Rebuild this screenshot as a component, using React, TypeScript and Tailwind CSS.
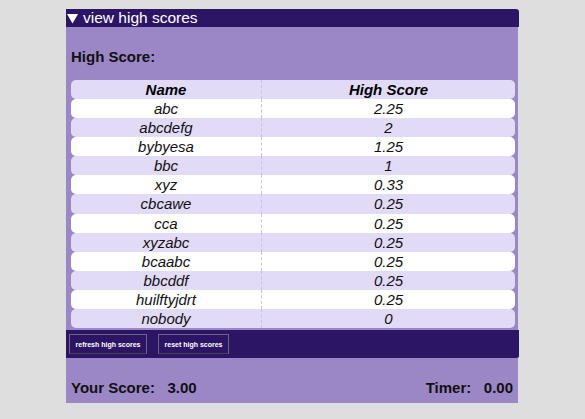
import React from "react";

const rows: [string, string][] = [
  ["abc", "2.25"],
  ["abcdefg", "2"],
  ["bybyesa", "1.25"],
  ["bbc", "1"],
  ["xyz", "0.33"],
  ["cbcawe", "0.25"],
  ["cca", "0.25"],
  ["xyzabc", "0.25"],
  ["bcaabc", "0.25"],
  ["bbcddf", "0.25"],
  ["huilftyjdrt", "0.25"],
  ["nobody", "0"],
];

export default function App() {
  return (
    <div
      className="w-[585px] h-[419px] bg-[#dedede] pt-[9px] pl-[66px]"
      style={{ fontFamily: '"Liberation Sans", Arial, sans-serif' }}
    >
      <div className="w-[453px] flex flex-col">
        <div className="h-[18px] bg-[#2d1566] rounded-tr-[3px] flex items-center pl-[1px] text-white text-[15.5px] leading-none">
          <svg width="11" height="10" viewBox="0 0 11 10" className="mr-[5px] mt-[1px]">
            <polygon points="0,0 11,0 5.5,9.5" fill="white" />
          </svg>
          <span>view high scores</span>
        </div>
        <div className="bg-[#9b87c5] w-[452px] pt-[21px] pb-[2px]">
          <div className="pl-[5px] text-[15px] font-bold text-[#111] h-[18px] leading-[18px]">High Score:</div>
          <div className="mt-[14px] ml-[5px] mr-[3px] grid grid-cols-[191px_1fr]">
            <div className="h-[19px] leading-[19px] text-center text-[15px] font-bold italic text-black bg-[#e2dbf8] rounded-l-[5px] border-r border-dashed border-[#c9bfe8]">Name</div>
            <div className="h-[19px] leading-[19px] text-center text-[15px] font-bold italic text-black bg-[#e2dbf8] rounded-r-[5px]">High Score</div>
            {rows.map(([n, s], i) => {
              const bg = i % 2 === 0 ? "bg-white" : "bg-[#e2dbf8]";
              return (
                <React.Fragment key={i}>
                  <div className={`h-[19.1px] leading-[19px] text-center text-[15px] italic text-[#111] ${bg} rounded-l-[5px] border-r border-dashed border-[#c9bfe8]`}>{n}</div>
                  <div className={`h-[19.1px] leading-[19px] text-center text-[15px] italic text-[#111] ${bg} rounded-r-[5px]`}>{s}</div>
                </React.Fragment>
              );
            })}
          </div>
        </div>
        <div className="h-[28px] bg-[#2d1566] flex items-center pl-[3px] gap-[11px] rounded-br-[2px]">
          <button className="h-[20px] w-[78px] bg-[#2d1566] border border-[#6b6780] border-b-[#444] text-white text-[7px] font-bold leading-none">refresh high scores</button>
          <button className="h-[20px] w-[71px] bg-[#2d1566] border border-[#6b6780] border-b-[#444] text-white text-[7px] font-bold leading-none">reset high scores</button>
        </div>
        <div className="h-[45px] bg-[#9b87c5] w-[452px] flex items-end justify-between px-[5px] pb-[4px] text-[15px] font-bold text-[#111]">
          <span>Your Score:&nbsp;&nbsp;&nbsp;3.00</span>
          <span>Timer:&nbsp;&nbsp; 0.00</span>
        </div>
      </div>
    </div>
  );
}
